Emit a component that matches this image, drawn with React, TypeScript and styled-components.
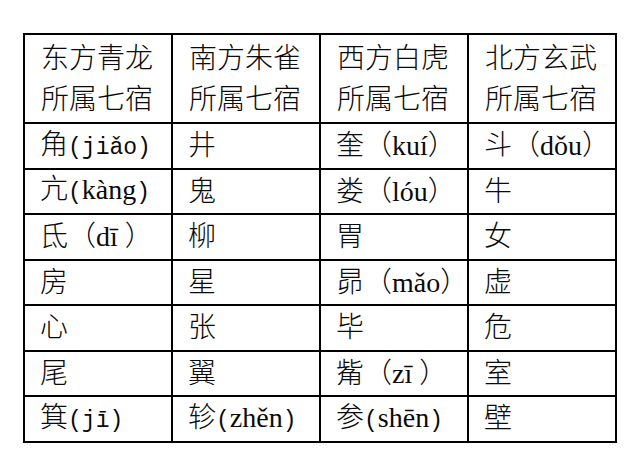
import React from "react";
import styled, { createGlobalStyle } from "styled-components";

const Global = createGlobalStyle`
  html, body { margin: 0; padding: 0; background: #fff; }
  body { font-family: "Liberation Serif", "Noto Sans CJK SC", serif; }
`;

const Page = styled.div`
  padding: 33px 0 0 23px;
`;

const Table = styled.table`
  border-collapse: collapse;
  table-layout: fixed;
  width: 594px;
  color: #0a0a0a;
  font-family: "Liberation Serif", "Noto Sans CJK SC", serif;
  font-size: 28px;
  font-weight: 300;
`;

const HeadCell = styled.th`
  border: 2px solid #000;
  height: 83px;
  padding: 0 0 4px 16px;
  text-align: left;
  vertical-align: middle;
  font-weight: 300;
  line-height: 41px;
  font-family: "Noto Sans CJK SC", sans-serif;
`;

const Cell = styled.td`
  border: 2px solid #000;
  height: 41.5px;
  padding: 0 0 2px 15px;
  text-align: left;
  vertical-align: middle;
  line-height: 28px;
  white-space: pre;
`;

const Han = styled.span`
  font-family: "Noto Sans CJK SC", sans-serif;
`;

const Paren = styled.span`
  font-family: "Liberation Mono", monospace;
  font-size: 23px;
  font-weight: 400;
`;

const Pinyin = styled.span<{ $mono?: boolean }>`
  font-family: ${(p) => (p.$mono ? '"Liberation Mono", monospace' : '"Liberation Serif", serif')};
  font-size: ${(p) => (p.$mono ? "23px" : "28px")};
  font-weight: 400;
`;

type Entry = { h: string; p?: string; mono?: boolean; half?: boolean };

const heads = [
  ["东方青龙", "所属七宿"],
  ["南方朱雀", "所属七宿"],
  ["西方白虎", "所属七宿"],
  ["北方玄武", "所属七宿"],
];

const rows: Entry[][] = [
  [{ h: "角", p: "jiǎo", mono: true, half: true }, { h: "井" }, { h: "奎", p: "kuí" }, { h: "斗", p: "dǒu" }],
  [{ h: "亢", p: "kàng", half: true }, { h: "鬼" }, { h: "娄", p: "lóu" }, { h: "牛" }],
  [{ h: "氐", p: "dī " }, { h: "柳" }, { h: "胃" }, { h: "女" }],
  [{ h: "房" }, { h: "星" }, { h: "昴", p: "mǎo" }, { h: "虚" }],
  [{ h: "心" }, { h: "张" }, { h: "毕" }, { h: "危" }],
  [{ h: "尾" }, { h: "翼" }, { h: "觜", p: "zī " }, { h: "室" }],
  [
    { h: "箕", p: "jī", mono: true, half: true },
    { h: "轸", p: "zhěn", half: true },
    { h: "参", p: "shēn", half: true },
    { h: "壁" },
  ],
];

function Content({ c }: { c: Entry }) {
  if (!c.p) return <Han>{c.h}</Han>;
  return (
    <>
      <Han>{c.h}</Han>
      {c.half ? <Paren>(</Paren> : <Han>（</Han>}
      <Pinyin $mono={c.mono}>{c.p}</Pinyin>
      {c.half ? <Paren>)</Paren> : <Han>）</Han>}
    </>
  );
}

export default function App() {
  return (
    <>
      <Global />
      <Page>
        <Table>
          <thead>
            <tr>
              {heads.map((h, i) => (
                <HeadCell key={i}>
                  {h[0]}
                  <br />
                  {h[1]}
                </HeadCell>
              ))}
            </tr>
          </thead>
          <tbody>
            {rows.map((r, i) => (
              <tr key={i}>
                {r.map((c, j) => (
                  <Cell key={j}>
                    <Content c={c} />
                  </Cell>
                ))}
              </tr>
            ))}
          </tbody>
        </Table>
      </Page>
    </>
  );
}
